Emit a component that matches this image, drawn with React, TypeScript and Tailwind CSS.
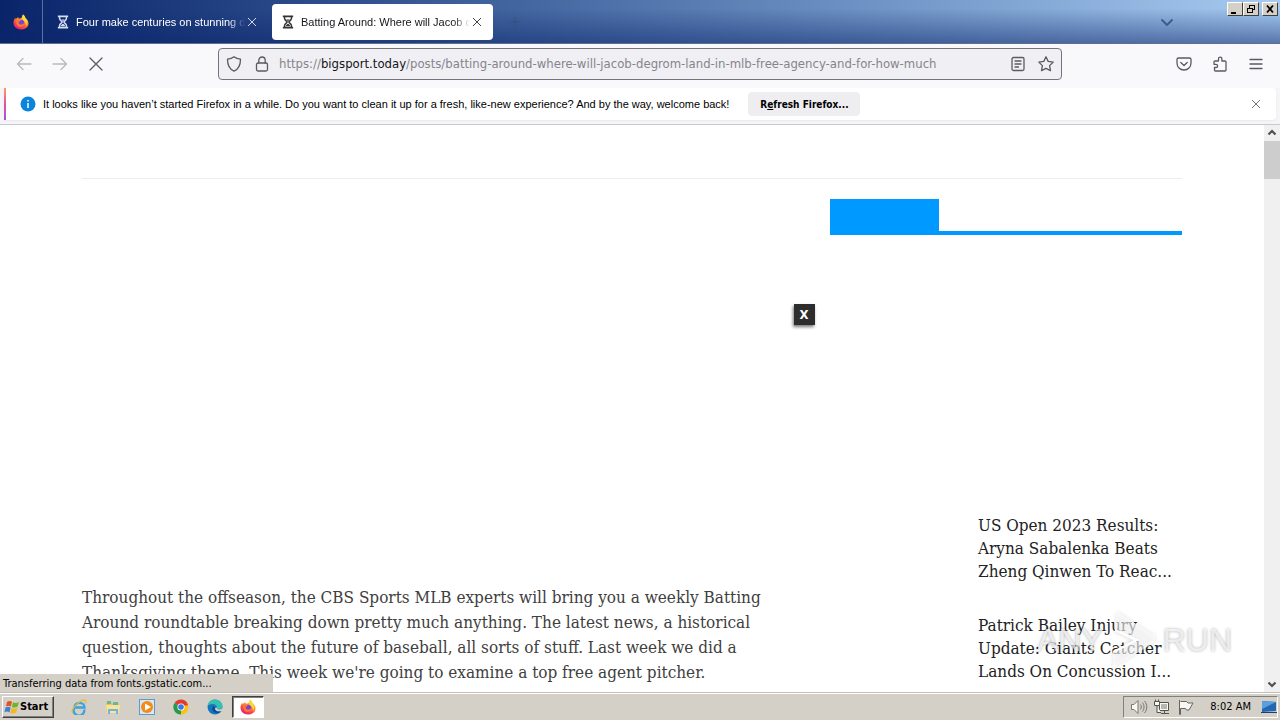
import type { ReactNode } from "react";

const UI = "font-['Liberation_Sans',sans-serif] text-[11px] leading-4";
const TAHOMA = "font-['DejaVu_Sans_Condensed','DejaVu_Sans',sans-serif]";

function FirefoxLogo({ className }: { className: string }) {
  return (
    <svg viewBox="0 0 32 32" className={className} aria-hidden="true">
      <defs>
        <linearGradient id="ffBody" x1="0.8" y1="0" x2="0.25" y2="1">
          <stop offset="0" stopColor="#fff04a" />
          <stop offset="0.35" stopColor="#ffa52b" />
          <stop offset="0.65" stopColor="#ff4f3c" />
          <stop offset="1" stopColor="#e31587" />
        </linearGradient>
      </defs>
      <path d="M20 1c3 2 4 4 5 7 3 2 6 6 6 11 0 7-6 12-15 12S1 25 1 17c0-4 2-8 4-10v4c2-3 4-4 6-5-1 2 0 3 1 3 3 0 5 0 6-3 1-2 1-4 2-5z" fill="url(#ffBody)" />
      <circle cx="16" cy="18" r="6.500" fill="#7a42d8" />
      <path d="M7 12c3-2 6-1 8 0 1 2-3 3-4 4 0 4 4 6 7 5 2-1 3-2 5-2-1 5-5 7-9 7-5-1-9-7-7-14z" fill="#ff7a2a" />
      <path d="M20 1c4 3 4 7 7 11 2 5 1 9-1 12 0-6-2-9-5-11-2-2-4-6-1-12z" fill="#ffd83c" />
    </svg>
  );
}

function Hourglass({ className }: { className: string }) {
  return (
    <svg viewBox="0 0 14 16" className={className} fill="none" stroke="currentColor" aria-hidden="true">
      <path d="M1 1.500h12M1 14.500h12" strokeWidth="2" />
      <path d="M3 2v2c0 2 3 3 3 4s-3 2-3 4v2M11 2v2c0 2-3 3-3 4s3 2 3 4v2" strokeWidth="1.700" />
      <path d="M5 5h4L7 7zM4.500 13c0-2 2-2.500 2.500-3 .5.5 2.500 1 2.500 3z" fill="currentColor" stroke="none" />
    </svg>
  );
}

function Glyph({ children, className = "size-4" }: { children: ReactNode; className?: string }) {
  return (
    <svg viewBox="0 0 16 16" className={`shrink-0 ${className}`} fill="none" stroke="currentColor" strokeWidth="1.300" strokeLinecap="round" strokeLinejoin="round" aria-hidden="true">
      {children}
    </svg>
  );
}

function Cross({ className }: { className?: string }) {
  return (
    <Glyph className={className}>
      <path d="M2 2l12 12M14 2L2 14" />
    </Glyph>
  );
}

function Caption({ label, children }: { label: string; children: ReactNode }) {
  return (
    <button aria-label={label} className="flex h-3.5 w-4 items-center justify-center border border-t-white border-l-white border-r-[#404040] border-b-[#404040] bg-[#d4d0c8] text-black">
      <svg viewBox="0 0 12 10" className="h-2.5 w-3" fill="none" stroke="currentColor" shapeRendering="crispEdges" aria-hidden="true">
        {children}
      </svg>
    </button>
  );
}

function TabStrip() {
  return (
    <header className="relative flex h-11 shrink-0 bg-linear-to-r from-[#0a246a] to-[#a6caf0]">
      <div className="flex w-full items-stretch border-b border-[#5f6f8f] bg-linear-to-b from-transparent from-20% to-[#0a246a]/50">
        <button aria-label="Firefox View" className="flex w-[43px] items-center justify-center border-r border-[#5a6fa3]">
          <FirefoxLogo className="size-4" />
        </button>
        <div role="tablist" className="flex items-center pt-px pl-1">
          <div className="flex h-9 w-[225px] items-center pr-[13px] pl-2.5 text-white">
            <Hourglass className="mr-[7px] h-3.5 w-3 shrink-0 text-[#d5def2]" />
            <button role="tab" aria-selected="false" className={`${UI} min-w-0 flex-1 overflow-hidden text-left whitespace-nowrap mask-r-from-90%`}>
              Four make centuries on stunning d
            </button>
            <button aria-label="Close tab" className="p-0.5"><Cross className="size-2.5" /></button>
          </div>
          <div className="flex h-9 w-[221px] items-center rounded bg-white pr-[9px] pl-2.5 text-[#15141a]">
            <Hourglass className="mr-[7px] h-3.5 w-3 shrink-0 text-[#333]" />
            <button role="tab" aria-selected="true" className={`${UI} min-w-0 flex-1 overflow-hidden text-left whitespace-nowrap mask-r-from-90%`}>
              Batting Around: Where will Jacob d
            </button>
            <button aria-label="Close tab" className="p-0.5"><Cross className="size-2.5" /></button>
          </div>
        </div>
        <button aria-label="New tab" className="ml-4 text-[#36517f]">
          <Glyph className="size-3"><path d="M8 2v12M2 8h12" /></Glyph>
        </button>
        <button aria-label="List all tabs" className="mr-[105px] ml-auto text-[#3d5a8c]">
          <Glyph><path d="M3 6l5 5 5-5" strokeWidth="1.800" /></Glyph>
        </button>
      </div>
      <div className="absolute top-0.5 right-0.5 flex">
        <Caption label="Minimize"><path d="M2 8.500h5" strokeWidth="2" /></Caption>
        <Caption label="Restore">
          <path d="M4 1.500h6M4.500 1v3M9.500 1v5M8 5.500h2M2 4.500h6M2.500 4v5M7.500 4v5M2 8.500h6" strokeWidth="1.200" />
        </Caption>
        <div className="w-[3px]" />
        <Caption label="Close"><path d="M3 1.500l6 7M9 1.500l-6 7" strokeWidth="1.800" shapeRendering="auto" /></Caption>
      </div>
    </header>
  );
}

function NavBar() {
  return (
    <nav className="flex h-11 shrink-0 items-center bg-[#f9f9fb] pb-1 pl-4 text-[#5b5a63]">
      <div className="flex w-[202px] shrink-0 gap-5">
        <button aria-label="Back" disabled className="text-[#b9b9be]"><Glyph><path d="M15 8H1.500M7 2.500L1.500 8 7 13.500" /></Glyph></button>
        <button aria-label="Forward" disabled className="text-[#b9b9be]"><Glyph><path d="M1 8h13.500M9 2.500L14.500 8 9 13.500" /></Glyph></button>
        <button aria-label="Stop"><Cross className="size-4" /></button>
      </div>
      <div className="flex h-8 min-w-0 flex-1 items-center rounded border border-[#74747c] bg-[#f0f0f4] px-[7px]">
        <Glyph><path d="M8 .8C6 2.500 3.500 3 1.500 3.200c0 5.500 1.500 9.800 6.500 12 5-2.200 6.500-6.500 6.500-12C12.500 3 10 2.500 8 .8z" /></Glyph>
        <Glyph className="ml-3 size-4"><rect x="2.500" y="7" width="11" height="8" rx="1.500" /><path d="M4.800 7V4.200a3.200 3.200 0 016.400 0V7" /></Glyph>
        <div className={`${TAHOMA} ml-[9px] grid min-w-0 flex-1 overflow-hidden text-[13px] leading-5 whitespace-nowrap`}>
          <div className="col-start-1 row-start-1 text-[#85848c]">
            https://<span className="text-[#15141a]">bigsport.today</span>/posts/batting-around-where-will-jacob-degrom-land-in-mlb-free-agency-and-for-how-much
          </div>
          <input aria-label="Search or enter address" className="col-start-1 row-start-1 w-full bg-transparent outline-none" />
        </div>
        <Glyph><rect x="2" y="1.500" width="12" height="13" rx="1.500" /><path d="M5 5h6M5 8h6M5 11h3.500" /></Glyph>
        <Glyph className="ml-3 size-4"><path d="M8 .8l2.200 4.600 5 .7-3.600 3.500.9 5L8 12.300l-4.500 2.300.9-5L.8 6.100l5-.7z" /></Glyph>
      </div>
      <div className="flex w-[218px] shrink-0 justify-end gap-5 pr-4">
        <Glyph><path d="M2.500 2h11A1.500 1.500 0 0115 3.500V7c0 4-3 7-7 7S1 11 1 7V3.500A1.500 1.500 0 012.500 2z" /><path d="M4.800 6.500L8 9.500l3.200-3" /></Glyph>
        <Glyph><path d="M3 5h3.500V2.800a1.700 1.700 0 013.400 0V5H13a1 1 0 011 1v8a1 1 0 01-1 1H3.500a1 1 0 01-1-1v-2.500H4a1.600 1.600 0 000-3.200H2V6a1 1 0 011-1z" /></Glyph>
        <button aria-label="Open application menu"><Glyph><path d="M2 3.500h12M2 8h12M2 12.500h12" /></Glyph></button>
      </div>
    </nav>
  );
}

function Notification() {
  return (
    <div className="shrink-0 border-b border-[#c8c8cd] bg-[#f5f5f7] pr-1 pb-1 pl-1">
      <div className="flex h-8 items-center rounded-sm bg-white shadow-xs">
        <div className="h-8 w-0.5 bg-linear-to-b from-[#ff9a5c] via-[#e0529c] to-[#a04fe0]" />
        <svg viewBox="0 0 16 16" className="ml-3.5 size-4 shrink-0" aria-hidden="true">
          <circle cx="8" cy="8" r="7.500" fill="#0a84dc" />
          <path d="M8 7v5M8 4v1.500" stroke="#fff" strokeWidth="1.500" />
        </svg>
        <p className={`${UI} ml-[7px] whitespace-nowrap text-black`}>
          It looks like you haven’t started Firefox in a while. Do you want to clean it up for a fresh, like-new experience? And by the way, welcome back!
        </p>
        <button className={`${TAHOMA} ml-[19px] h-6 w-28 shrink-0 rounded bg-[#eeeef0] pt-0.5 text-[10px] leading-4 font-bold whitespace-nowrap text-black`}>
          R<u>e</u>fresh Firefox...
        </button>
        <button aria-label="Close message" className="mr-[15px] ml-auto text-[#5b5b66]"><Cross className="size-2.5" /></button>
      </div>
    </div>
  );
}

const STORY = `Throughout the offseason, the CBS Sports MLB experts will bring you a weekly Batting
Around roundtable breaking down pretty much anything. The latest news, a historical
question, thoughts about the future of baseball, all sorts of stuff. Last week we did a
Thanksgiving theme. This week we're going to examine a top free agent pitcher.`;

const RELATED = [
  "US Open 2023 Results:\nAryna Sabalenka Beats\nZheng Qinwen To Reac...",
  "Patrick Bailey Injury\nUpdate: Giants Catcher\nLands On Concussion I...",
];

function Page() {
  return (
    <div className="relative flex min-h-0 flex-1 bg-white">
      <main className="min-w-0 flex-1 overflow-hidden font-['DejaVu_Serif_Condensed','DejaVu_Serif',serif]">
        <div className="mx-auto max-w-[1100px]">
          <div className="h-[54px] border-b border-[#ececec]" />
          <div className="flex gap-[48px]">
            <article className="min-w-0 flex-1 pt-[406px]">
              <p className="text-[17px] leading-[25px] whitespace-pre text-[#404040]">{STORY}</p>
            </article>
            <aside className="w-[352px] shrink-0 pt-5">
              <div className="border-b-4 border-[#0099ff]">
                <div className="h-8 w-[109px] bg-[#0099ff]" />
              </div>
              <ul className="mt-[279px] ml-[148px] space-y-[31px]">
                {RELATED.map((title) => (
                  <li key={title} className="text-[17px] leading-[23px] whitespace-pre text-[#222]">
                    <a href="#">{title}</a>
                  </li>
                ))}
              </ul>
            </aside>
          </div>
        </div>
      </main>

      <div className="flex w-4 shrink-0 flex-col items-center bg-[#f0f0f0] text-[#505050]">
        <Glyph><path d="M4.500 9.500L8 6l3.500 3.500" strokeWidth="2.200" strokeLinecap="butt" strokeLinejoin="miter" /></Glyph>
        <div className="h-[38px] w-full bg-[#cdcdcd]" />
        <Glyph className="mt-auto size-4"><path d="M4.500 6.500L8 10l3.500-3.500" strokeWidth="2.200" strokeLinecap="butt" strokeLinejoin="miter" /></Glyph>
      </div>

      <button aria-label="Close advertisement" className="absolute top-[179px] left-[62%] flex h-[21px] w-[21px] items-center justify-center bg-[#2d2d2d] text-[13px] leading-4 font-bold text-white shadow-[-1px_2px_3px_#0008] font-['DejaVu_Sans_Condensed',sans-serif]">
        X
      </button>

      <div className="pointer-events-none absolute right-12 bottom-5 flex items-center font-['Liberation_Sans_Narrow','Liberation_Sans',sans-serif] text-[32px] leading-[60px] text-white/70 [text-shadow:0_0_3px_#0005]">
        <span>ANY</span>
        <svg viewBox="0 0 52 64" className="mx-1 h-16 w-[52px] drop-shadow-[0_0_2px_#0003]" aria-hidden="true">
          <path d="M10 4l38 24v6L6 60V44l22-10L8 22z" fill="#fff" fillOpacity="0.6" />
          <path d="M8 22l22 10L6 44" fill="none" stroke="#fff" strokeWidth="2" />
        </svg>
        <span>RUN</span>
      </div>

      <p className={`${TAHOMA} absolute bottom-0 left-0 h-[18px] w-[273px] bg-[#d4d0c8] pt-px pl-[3px] text-[11px] leading-[18px] text-black`}>
        Transferring data from fonts.gstatic.com...
      </p>
    </div>
  );
}

function Launch({ label, children }: { label: string; children: ReactNode }) {
  return (
    <button aria-label={label} className="flex w-[34px] items-center justify-center">
      <svg viewBox="0 0 16 16" className="size-4" aria-hidden="true">{children}</svg>
    </button>
  );
}

function Taskbar() {
  return (
    <footer className="flex h-7 shrink-0 items-stretch border-t border-[#c4c0b8] bg-[#d4d0c8] pt-[3px] pr-0.5 pb-0.5 pl-0.5 shadow-[inset_0_1px_0_#fff]">
      <button className={`${TAHOMA} flex w-[52px] items-center border border-t-white border-l-white border-r-[#404040] border-b-[#404040] pl-px text-[11px] leading-4 font-bold text-black shadow-[inset_-1px_-1px_0_#808080]`}>
        <svg viewBox="0 0 16 16" className="size-4 shrink-0" aria-hidden="true">
          <path d="M3 3c2-1.500 3.500-1.300 5-.2L6.800 7.500C5.300 6.500 4 6.300 2 7.300z" fill="#e8501e" />
          <path d="M9 3.200c2 1 4 1 6-.5l-1.300 4.800c-2 1.300-4 1.300-5.900.4z" fill="#6cb52d" />
          <path d="M1.600 8.500c2-1 3.500-.8 5 .2l-1.200 4.800c-1.500-1-3-1.300-5-.3z" fill="#3a7fd8" />
          <path d="M7.500 9c2 1 4 1 6-.4l-1.400 4.900c-2 1.300-4 1.300-5.900.3z" fill="#f5b81c" />
        </svg>
        Start
      </button>
      <div className="ml-2 flex">
        <Launch label="Internet Explorer">
          <path d="M13.200 10.500A5.300 5.300 0 113.500 8.500h10C13.500 5.500 11.500 3.800 8.500 3.800S3.600 6 3.400 9" fill="none" stroke="#39a4df" strokeWidth="2.300" />
          <path d="M2 14C-1 13 4 5 10 2c4-2 6-1 4.500 2.500" fill="none" stroke="#eab82d" strokeWidth="1.200" />
        </Launch>
        <Launch label="File Explorer">
          <path d="M1 3h5l1 1h7v9H1z" fill="#e9c65b" />
          <path d="M2 2h4v3H2zM8 3h5v3H8z" fill="#68b7a2" />
          <path d="M1 6h14l-1 8H2z" fill="#f8e39b" />
          <path d="M4 15v-4h8v4" fill="none" stroke="#74b4dc" strokeWidth="2" />
        </Launch>
        <Launch label="Media Player">
          <rect x="0.500" y="0.500" width="15" height="15" fill="#d4e8f5" stroke="#5c9ccc" />
          <circle cx="8" cy="8" r="6" fill="#f38b16" />
          <path d="M6 4.500v7L12 8z" fill="#fff" />
        </Launch>
        <Launch label="Chrome">
          <path d="M8 8L1.500 4A7.500 7.500 0 0114.500 4.300z" fill="#e33b2e" />
          <path d="M8 8l6.500-3.700A7.500 7.500 0 018 15.500L7 15z" fill="#fbc116" />
          <path d="M8 8v7.500A7.500 7.500 0 011.500 4z" fill="#269b4b" />
          <path d="M8 4.500h6.700v2H8z" fill="#e33b2e" />
          <circle cx="8" cy="8" r="3.600" fill="#fff" />
          <circle cx="8" cy="8" r="2.800" fill="#3878e8" />
        </Launch>
        <Launch label="Edge">
          <circle cx="8" cy="8" r="7.500" fill="#1775bd" />
          <path d="M.6 7C1 2 5 .5 8 .5c5 0 7.500 3.500 7.500 6.500 0 2.500-2 3.500-4 3.500-2.500 0-2-1-1.500-2C10 6.500 8 5 5.500 5 3 5 1 6 .6 7z" fill="#35c1b1" />
          <path d="M6 7c-2 3 0 7 4 7 2 0 4-1 4.500-2-3 1-7 0-6-3z" fill="#0c4c94" />
          <path d="M10 8.500c-1 2 3 3 5.500.500v3C13 12.500 8 13 8 9z" fill="#d4d0c8" />
        </Launch>
        <button aria-label="Firefox" className="flex w-8 items-center justify-center border border-t-[#404040] border-l-[#404040] border-r-white border-b-white bg-white shadow-[inset_1px_1px_0_#808080]">
          <FirefoxLogo className="size-4" />
        </button>
      </div>
      <div className={`${TAHOMA} ml-auto flex items-center border border-t-[#808080] border-l-[#808080] border-r-white border-b-white pl-1.5 text-[11px] leading-4 text-black`}>
        <svg viewBox="0 0 18 16" className="h-4 w-[18px]" fill="#f7f7f5" stroke="#77756f" aria-hidden="true">
          <path d="M1.500 5.500h2.500l4-4v13l-4-4H1.500z" />
          <path d="M10.500 5.500c1 1.500 1 3.500 0 5M12.500 3.500c2 2.500 2 6.500 0 9M14.500 2c3 3.500 3 8.500 0 12" fill="none" />
        </svg>
        <svg viewBox="0 0 16 16" className="ml-1.5 size-4" fill="#f7f7f5" stroke="#55534e" aria-hidden="true">
          <path d="M5.500 3.500h9v8h-9zM7 14.500h8M10.500 12v2" />
          <path d="M7 5h6v5H7z" fill="#b8b6b0" stroke="none" />
          <path d="M.5 2.500h5v4h-5zM1.500.5v2M4.500.5v2M3 7v6.500h4" />
        </svg>
        <svg viewBox="0 0 16 16" className="ml-2 size-4" fill="#f7f7f5" stroke="#66645f" aria-hidden="true">
          <path d="M1.500 1v14.500h1V9.500h5l1 1.500h2.500l4-7h-5l-1.500-1.500h-6" />
        </svg>
        <time className="ml-4 whitespace-nowrap">8:02 AM</time>
        <svg viewBox="0 0 16 14" className="ml-2.5 h-3.5 w-4" aria-hidden="true">
          <path d="M1 1l14 1v9l-14 1z" fill="#2467b5" />
          <path d="M1 1l14 1-14 7z" fill="#5ba0dc" />
          <path d="M0 12.500h16" stroke="#1c3f70" />
        </svg>
      </div>
    </footer>
  );
}

export default function App() {
  return (
    <div className="flex h-screen flex-col overflow-hidden bg-white">
      <TabStrip />
      <NavBar />
      <Notification />
      <Page />
      <Taskbar />
    </div>
  );
}
